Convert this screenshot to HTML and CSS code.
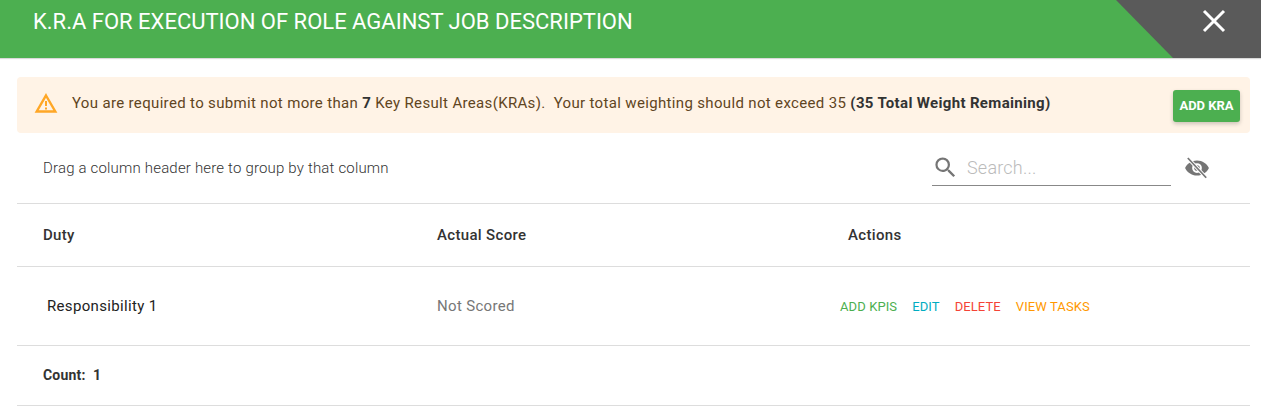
FILE: index.html
```html
<!DOCTYPE html>
<html lang="en">
<head>
  <meta charset="UTF-8">
  <title>K.R.A</title>
  <link rel="stylesheet" href="styles.css">
</head>
<body>

<div class="header">
  <h1 class="header-title">K.R.A FOR EXECUTION OF ROLE AGAINST JOB DESCRIPTION</h1>
  <div class="header-corner">
    <svg class="close-icon" viewBox="0 0 24 24" width="24" height="24"><path d="M2 2 L22 22 M22 2 L2 22" stroke="#fff" stroke-width="3" fill="none"/></svg>
  </div>
</div>

<div class="content">
  <div class="alert">
    <svg class="alert-icon" viewBox="0 0 24 24" width="24" height="24"><path d="M12 4.500 L21.300 20.500 H2.700 Z" stroke="#ffa726" stroke-width="2.400" fill="none" stroke-linejoin="miter"/><path d="M11 10 H13 V15 H11 Z M11 16.500 H13 V18.500 H11 Z" fill="#ffa726"/></svg>
    <p class="alert-text">You are required to submit not more than <b>7</b> Key Result Areas(KRAs).&nbsp; Your total weighting should not exceed 35 <b>(35 Total Weight Remaining)</b></p>
    <button class="add-btn">ADD KRA</button>
  </div>

  <div class="toolbar">
    <span class="group-hint">Drag a column header here to group by that column</span>
    <div class="search">
      <svg viewBox="0 0 24 24" width="27" height="27"><path fill="#757575" d="M15.5 14h-.79l-.28-.27A6.47 6.47 0 0 0 16 9.5 6.5 6.5 0 1 0 9.5 16c1.61 0 3.09-.59 4.23-1.57l.27.28v.79l5 4.99L20.49 19l-4.99-5zm-6 0C7.01 14 5 11.99 5 9.5S7.01 5 9.5 5 14 7.01 14 9.500 11.99 14 9.5 14z"/></svg>
      <span class="search-text">Search...</span>
    </div>
    <svg class="eye-icon" viewBox="0 0 24 24" width="26" height="26"><path fill="#757575" d="M12 5C7 5 2.7 8.1 1 12c1.7 3.900 6 7 11 7s9.300-3.100 11-7c-1.700-3.900-6-7-11-7zm0 11.500a4.500 4.500 0 1 1 0-9 4.500 4.500 0 0 1 0 9z"/><circle cx="12" cy="12" r="2.600" fill="#757575"/><path d="M3.500 2.800 L20.500 21" stroke="#fff" stroke-width="3.200"/><path d="M3.500 2.800 L20.500 21" stroke="#757575" stroke-width="1.600"/></svg>
  </div>

  <div class="row row-head">
    <div class="cell-duty">Duty</div>
    <div>Actual Score</div>
    <div>Actions</div>
  </div>

  <div class="row row-body">
    <div class="cell-duty resp">Responsibility 1</div>
    <div class="score">Not Scored</div>
    <div class="actions">
      <a class="green">ADD KPIS</a>
      <a class="cyan">EDIT</a>
      <a class="red">DELETE</a>
      <a class="orange">VIEW TASKS</a>
    </div>
  </div>

  <div class="footer-row">Count:&nbsp; 1</div>
</div>

</body>
</html>
```

FILE: styles.css
```css
* {
  box-sizing: border-box;
}
body {
  margin: 0;
  font-family: Roboto, Arial, sans-serif;
  background: #fff;
  color: #333;
}
.header {
  display: flex;
  justify-content: space-between;
  height: 58px;
  background: #4caf50;
  box-shadow: 0 1px 1px rgba(0,0,0,0.15);
}
.header-title {
  margin: 0;
  padding: 10px 0 0 33px;
  font-size: 22px;
  font-weight: 400;
  line-height: 24px;
  color: #fff;
}
.header-corner {
  display: flex;
  justify-content: flex-end;
  width: 145px;
  padding: 9px 35px 0 0;
  background: #5a5a5a;
  clip-path: polygon(0 0, 100% 0, 100% 100%, 57px 100%);
}
.content {
  padding: 19px 11px 0 17px;
}
.alert {
  display: flex;
  align-items: center;
  height: 56px;
  padding: 0 10px 0 17px;
  background: #fff3e6;
  border-radius: 4px;
}
.alert-icon {
  flex: none;
  margin: -4px 14px 0 0;
}
.alert-text {
  flex: 1;
  margin: -5px 0 0;
  font-size: 15px;
  letter-spacing: 0.34px;
  color: #5f4522;
}
.alert-text b {
  font-weight: 700;
  color: #333;
}
.add-btn {
  width: 67px;
  height: 32px;
  margin-top: 1px;
  padding: 0;
  border: none;
  border-radius: 3px;
  background: #4caf50;
  color: #fff;
  font-family: Roboto, Arial, sans-serif;
  font-size: 13px;
  font-weight: 700;
  box-shadow: 0 2px 4px rgba(0,0,0,0.2);
}
.toolbar {
  display: flex;
  align-items: center;
  height: 71px;
  padding-left: 26px;
  border-bottom: 1px solid #ddd;
}
.group-hint {
  flex: 1;
  font-size: 15px;
  font-weight: 300;
  letter-spacing: 0.18px;
  color: #333;
}
.search {
  display: flex;
  align-items: center;
  gap: 8px;
  width: 239px;
  height: 36px;
  margin-top: -1px;
  border-bottom: 1px solid #888;
}
.search-text {
  font-size: 18px;
  font-weight: 300;
  letter-spacing: 0.2px;
  color: #bbb;
}
.eye-icon {
  margin: 0 40px 0 13px;
}
.row {
  display: grid;
  grid-template-columns: 394px 411px 1fr;
  align-items: center;
  padding-left: 26px;
  border-bottom: 1px solid #ddd;
  font-size: 15px;
  letter-spacing: 0.33px;
}
.row-head {
  height: 63px;
  font-weight: 500;
  color: #333;
}
.row-body {
  height: 79px;
}
.resp {
  padding-left: 4px;
  color: #222;
}
.score {
  color: #777;
}
.actions {
  display: flex;
  gap: 15px;
  margin-left: -8px;
  font-size: 13px;
  letter-spacing: 0.1px;
}
.green { color: #4caf50; }
.cyan { color: #00acc1; }
.red { color: #f44336; }
.orange { color: #ff9800; }
.footer-row {
  display: flex;
  align-items: center;
  height: 60px;
  padding: 0 0 2px 26px;
  border-bottom: 1px solid #ddd;
  font-size: 14px;
  font-weight: 700;
  letter-spacing: 0.2px;
  color: #333;
}
```
